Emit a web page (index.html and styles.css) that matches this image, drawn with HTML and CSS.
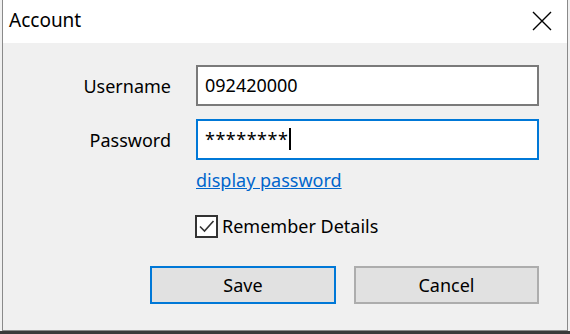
FILE: index.html
```html
<!DOCTYPE html>
<html lang="en">

<head>
    <meta charset="UTF-8">
    <meta name="viewport" content="width=device-width, initial-scale=1.0">
    <title>Account</title>
    <link rel="stylesheet" href="styles.css">
</head>

<body>
    <div class="dialog">
        <div class="title-bar">
            <span class="title">Account</span>
            <button class="close-button" type="button" aria-label="Close">
                <svg width="20" height="20" viewBox="0 0 20 20">
                    <path d="M1 1 L19 19 M19 1 L1 19" stroke="#000" stroke-width="1.4" fill="none" />
                </svg>
            </button>
        </div>
        <form class="account-form" action="#" method="post">
            <div class="form-row">
                <label for="username" class="field-label">Username</label>
                <input type="text" id="username" name="username" value="092420000" class="field">
            </div>
            <div class="form-row">
                <label for="password" class="field-label">Password</label>
                <div class="field field-focus">********<span class="caret"></span></div>
            </div>
            <div class="form-row link-row">
                <a href="#" class="show-link">display password</a>
            </div>
            <div class="form-row check-row">
                <label class="check">
                    <span class="check-box">
                        <svg width="19" height="19" viewBox="0 0 19 19">
                            <path d="M3 9.5 L7.5 14 L16.5 4" stroke="#333" stroke-width="1.6" fill="none" />
                        </svg>
                    </span>
                    Remember Details
                </label>
            </div>
            <div class="buttons">
                <button type="submit" class="btn btn-default">Save</button>
                <button type="button" class="btn">Cancel</button>
            </div>
        </form>
    </div>
    <div class="below"></div>
</body>

</html>
```

FILE: styles.css
```css
body {
    margin: 0;
    font-family: "Noto Sans", "Open Sans", sans-serif;
    background-color: #f0f0f0;
    width: 570px;
    height: 334px;
    overflow: hidden;
}

.dialog {
    width: 564px;
    margin-left: 2px;
    border: 1px solid #8a8a8a;
    border-top: none;
    background-color: #f0f0f0;
}

.title-bar {
    height: 43px;
    background-color: #fff;
    display: flex;
    align-items: center;
    justify-content: space-between;
    padding: 0 15px 0 6px;
}

.title {
    font-size: 19px;
    color: #000;
    margin-top: -3px;
}

.close-button {
    border: none;
    background: none;
    padding: 0;
    width: 20px;
    height: 20px;
    margin-top: -2px;
}

.account-form {
    padding-top: 22px;
    height: 287px;
    box-sizing: border-box;
}

.form-row {
    display: flex;
    align-items: center;
    margin-bottom: 13px;
}

.field-label {
    width: 168px;
    text-align: right;
    font-size: 18px;
    color: #000;
    margin-right: 25px;
}

.field {
    width: 343px;
    height: 41px;
    box-sizing: border-box;
    border: 2px solid #7a7a7a;
    background-color: #fff;
    font-family: "Noto Sans", "Open Sans", sans-serif;
    font-size: 18px;
    padding: 0 0 2px 7px;
    color: #000;
    display: flex;
    align-items: center;
    outline: none;
}

.field-focus {
    border-color: #0078d7;
    letter-spacing: 0.5px;
}

.caret {
    display: inline-block;
    width: 2px;
    height: 22px;
    background-color: #000;
    margin-left: 1px;
}

.link-row {
    padding-left: 193px;
    margin-top: -5px;
    margin-bottom: 0;
}

.show-link {
    color: #0066cc;
    font-size: 18px;
}

.check-row {
    padding-left: 192px;
    margin-top: 22px;
}

.check {
    display: flex;
    align-items: center;
    font-size: 18px;
    color: #000;
}

.check-box {
    width: 23px;
    height: 23px;
    box-sizing: border-box;
    border: 2px solid #333;
    background-color: #fff;
    display: flex;
    align-items: center;
    justify-content: center;
    margin-right: 4px;
}

.buttons {
    display: flex;
    gap: 18px;
    padding-left: 147px;
    margin-top: 28px;
}

.btn {
    width: 185px;
    height: 38px;
    background-color: #e1e1e1;
    border: 2px solid #adadad;
    font-family: "Noto Sans", "Open Sans", sans-serif;
    font-size: 18px;
    color: #000;
    padding: 0;
}

.btn-default {
    width: 186px;
    border-color: #0078d7;
}

.below {
    height: 10px;
    background-color: #3a3a3a;
}
```
